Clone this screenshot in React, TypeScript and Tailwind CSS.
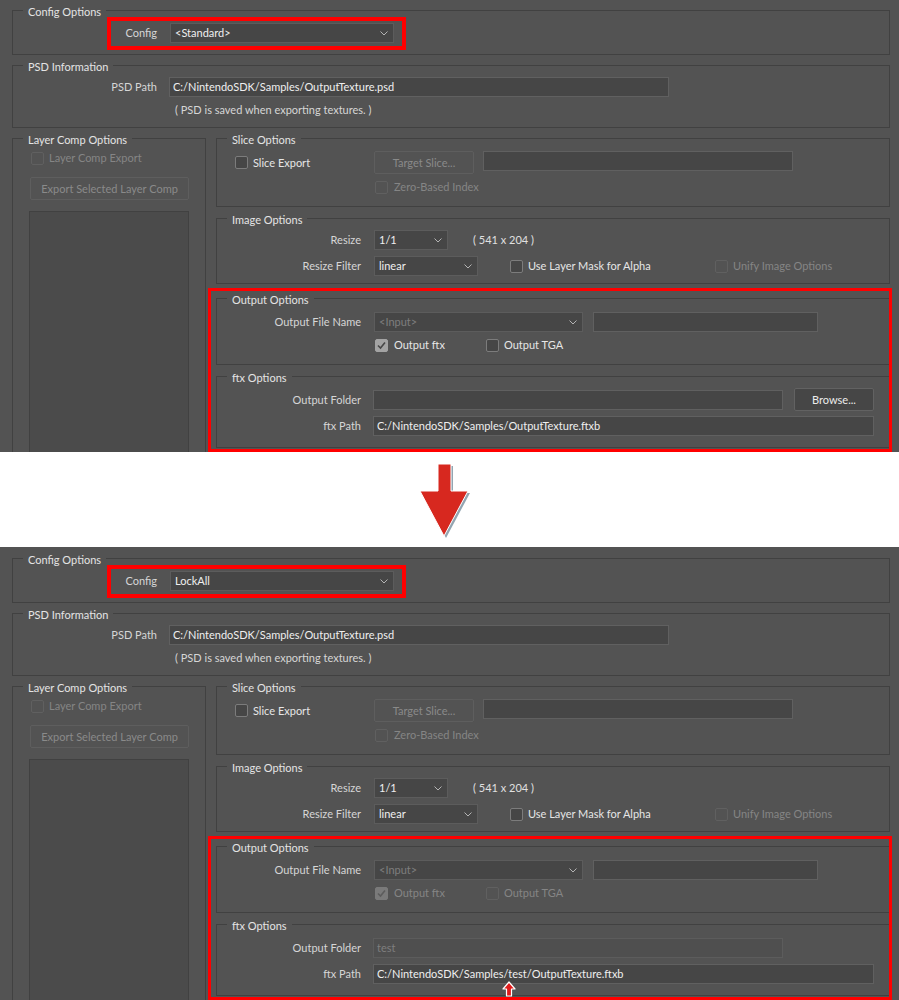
import React from "react";

type Cls = { className?: string };

const Chevron = () => (
  <svg width="8" height="5" viewBox="0 0 8 5" className="shrink-0">
    <polyline points="0.5,0.5 4,4 7.5,0.5" fill="none" stroke="#b4b4b4" strokeWidth="1" />
  </svg>
);

const Checkbox = ({ checked = false, disabled = false }: { checked?: boolean; disabled?: boolean }) => (
  <span
    className={`flex h-[13px] w-[13px] shrink-0 items-center justify-center rounded-[2px] border ${
      checked
        ? disabled
          ? "border-[#7a7a7a] bg-[#7a7a7a]"
          : "border-[#a3a3a3] bg-[#a3a3a3]"
        : disabled
          ? "border-[#606060] bg-[#535353]"
          : "border-[#7c7c7c] bg-[#464646]"
    }`}
  >
    {checked && (
      <svg width="11" height="11" viewBox="0 0 11 11">
        <polyline
          points="2,5.5 4.5,8 9,2.5"
          fill="none"
          stroke={disabled ? "#5c5c5c" : "#474747"}
          strokeWidth="1.6"
        />
      </svg>
    )}
  </span>
);

const Select = ({ value, disabled = false, className = "" }: { value: string; disabled?: boolean } & Cls) => (
  <div
    className={`flex h-[20px] shrink-0 items-center justify-between border border-[#5c5c5c] bg-[#464646] pl-[4px] pr-[5px] ${className}`}
  >
    <span className={disabled ? "text-[#7e7e7e]" : "text-[#efefef]"}>{value}</span>
    <Chevron />
  </div>
);

const Input = ({ value = "", disabled = false, className = "" }: { value?: string; disabled?: boolean } & Cls) => (
  <div
    className={`flex h-[20px] shrink-0 items-center border px-[3px] ${
      disabled ? "border-[#5c5c5c] bg-[#4f4f4f] text-[#7e7e7e]" : "border-[#606060] bg-[#464646] text-[#efefef]"
    } ${className}`}
  >
    {value}
  </div>
);

const Button = ({ children, disabled = false, className = "" }: { children: React.ReactNode; disabled?: boolean } & Cls) => (
  <div
    className={`flex h-[23px] shrink-0 items-center justify-center rounded-[2px] border ${
      disabled ? "border-[#5e5e5e] bg-[#535353] text-[#8a8a8a]" : "border-[#626262] bg-[#464646] text-[#ececec]"
    } ${className}`}
  >
    {children}
  </div>
);

const Group = ({ title, className = "", children }: { title: string; children: React.ReactNode } & Cls) => (
  <div className={`border border-[#414141] ${className}`}>
    <div className="mt-[-7px] ml-[10px] w-fit bg-[#535353] px-[5px] text-[#e4e4e4]">{title}</div>
    {children}
  </div>
);

const FieldRow = ({ label, className = "", children }: { label: string; children?: React.ReactNode } & Cls) => (
  <div className={`flex items-center ${className}`}>
    <span className="w-[144px] shrink-0 text-right text-[#d6d6d6]">{label}</span>
    {children}
  </div>
);

const Check = ({
  label,
  checked,
  disabled,
  className = "",
  gap = "gap-[5px]",
}: { label: string; checked?: boolean; disabled?: boolean; gap?: string } & Cls) => (
  <div className={`flex h-[16px] items-center ${gap} ${className}`}>
    <Checkbox checked={checked} disabled={disabled} />
    <span className={disabled ? "text-[#858585]" : "text-[#e6e6e6]"}>{label}</span>
  </div>
);

const SmallUpArrow = () => (
  <svg width="14" height="16" viewBox="0 0 14 16" className="absolute left-[129px] top-[17px]">
    <path d="M7 1 L13 8 L9.5 8 L9.5 15 L4.5 15 L4.5 8 L1 8 Z" fill="#e01b1b" stroke="#ffffff" strokeWidth="1.2" strokeLinejoin="round" />
  </svg>
);

function Panel({ after }: { after: boolean }) {
  return (
    <div
      className={`overflow-hidden bg-[#535353] pl-[12px] pr-[9px] ${after ? "h-[453px] pt-[11px]" : "h-[452px] pt-[10px]"}`}
    >
      <Group title="Config Options" className="pb-[11px]">
        <div className="relative mt-[3px] w-fit">
          <FieldRow label="Config">
            <Select className="ml-[13px] w-[224px]" value={after ? "LockAll" : "<Standard>"} />
          </FieldRow>
          <div className="pointer-events-none absolute top-[-6px] bottom-[-7px] left-[94px] right-[-12px] border-[4px] border-[#ff0000]" />
        </div>
      </Group>

      <Group title="PSD Information" className="mt-[10px] pb-[9px]">
        <FieldRow label="PSD Path" className="mt-[2px]">
          <Input className="ml-[12px] w-[500px]" value="C:/NintendoSDK/Samples/OutputTexture.psd" />
        </FieldRow>
        <div className="mt-[5px] pl-[162px] text-[#d6d6d6]">( PSD is saved when exporting textures. )</div>
      </Group>

      <div className="mt-[10px] flex gap-[10px]">
        <Group title="Layer Comp Options" className="w-[194px] shrink-0">
          <div className="px-[16px]">
            <Check label="Layer Comp Export" disabled className="mt-[2px] pl-[2px]" />
            <Button disabled className="mt-[11px] ml-[1px]">
              Export Selected Layer Comp
            </Button>
            <div className="mt-[11px] h-[300px] border border-[#414141] bg-[#4b4b4b]" />
          </div>
        </Group>

        <div className="flex-1">
          <Group title="Slice Options" className="pb-[11px]">
            <div className="mt-[3px] flex items-start pl-[18px]">
              <div className="flex h-[23px] w-[139px] shrink-0 items-center">
                <Check label="Slice Export" />
              </div>
              <Button disabled className="w-[100px]">
                Target Slice...
              </Button>
              <Input className="ml-[9px] w-[310px]" />
            </div>
            <Check label="Zero-Based Index" disabled gap="gap-[6px]" className="mt-[5px] pl-[158px]" />
          </Group>

          <Group title="Image Options" className="mt-[11px] pb-[7px]">
            <FieldRow label="Resize" className="mt-[2px]">
              <Select className="ml-[13px] w-[74px]" value="1/1" />
              <span className="ml-[25px] text-[#e0e0e0]">( 541 x 204 )</span>
            </FieldRow>
            <FieldRow label="Resize Filter" className="mt-[6px]">
              <Select className="ml-[13px] w-[104px]" value="linear" />
              <Check label="Use Layer Mask for Alpha" className="ml-[32px] w-[205px] shrink-0" />
              <Check label="Unify Image Options" disabled />
            </FieldRow>
          </Group>

          <div className="relative mt-[14px]">
            <Group title="Output Options" className="pb-[11px]">
              <FieldRow label="Output File Name" className="mt-[4px]">
                <Select disabled className="ml-[13px] w-[209px]" value="<Input>" />
                <Input className="ml-[10px] w-[225px]" />
              </FieldRow>
              <div className="mt-[5px] flex items-center pl-[158px]">
                <Check label="Output ftx" checked disabled={after} gap="gap-[6px]" className="w-[111px] shrink-0" />
                <Check label="Output TGA" disabled={after} />
              </div>
            </Group>

            <Group title="ftx Options" className="mt-[11px] pb-[11px]">
              <FieldRow label="Output Folder" className="mt-[2px] h-[23px]">
                <Input className="ml-[12px] w-[410px]" disabled={after} value={after ? "test" : ""} />
                {!after && <Button className="ml-[11px] w-[80px]">Browse...</Button>}
              </FieldRow>
              <FieldRow label="ftx Path" className="mt-[5px]">
                <div className="relative ml-[12px]">
                  <Input
                    className="w-[501px]"
                    value={after ? "C:/NintendoSDK/Samples/test/OutputTexture.ftxb" : "C:/NintendoSDK/Samples/OutputTexture.ftxb"}
                  />
                  {after && <SmallUpArrow />}
                </div>
              </FieldRow>
            </Group>

            <div className="pointer-events-none absolute top-[-10px] bottom-[-4px] left-[-8px] right-[-2px] border-[3px] border-[#ff0000]" />
          </div>
        </div>
      </div>
    </div>
  );
}

const BigDownArrow = () => (
  <svg width="60" height="82" viewBox="0 0 60 82" className="ml-[414px]">
    <path d="M26 6 L39 6 L39 33 L56 33 L32 78 L8 33 L26 33 Z" fill="#6d8797" opacity="0.75" />
    <path d="M24 4 L37 4 L37 31 L54 31 L30 76 L6 31 L24 31 Z" fill="#d7281f" stroke="#ffffff" strokeWidth="1" strokeLinejoin="round" />
  </svg>
);

export default function App() {
  return (
    <div className="w-[899px] font-['Lato',sans-serif] text-[11px] leading-[16px]">
      <Panel after={false} />
      <div className="h-[95px] bg-white pt-[8px]">
        <BigDownArrow />
      </div>
      <Panel after />
    </div>
  );
}
